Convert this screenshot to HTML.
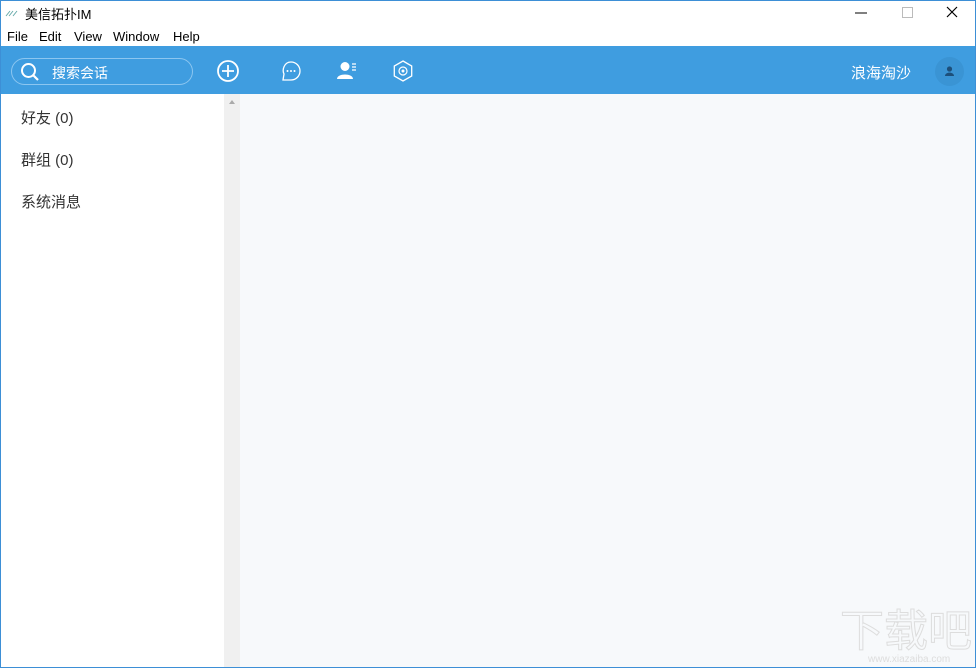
<!DOCTYPE html>
<html><head><meta charset="utf-8"><style>
*{margin:0;padding:0;box-sizing:border-box}
body{width:976px;height:668px;overflow:hidden;background:#fff;font-family:"Liberation Sans","Noto Sans CJK SC",sans-serif;position:relative}
.win{position:absolute;left:0;top:0;width:976px;height:668px;border:1px solid #3d8fd6}
.title{position:absolute;left:25px;top:4px;font-size:13px;color:#000}
.menu{position:absolute;top:29px;font-size:13px;color:#000}
.bar{position:absolute;left:1px;top:46px;width:974px;height:48px;background:#3f9de0}
.search{position:absolute;left:11px;top:58px;width:182px;height:27px;border:1px solid #8cc6f0;border-radius:14px}
.search span{position:absolute;left:40px;top:4px;color:#fff;font-size:14px}
.side{position:absolute;left:1px;top:94px;width:223px;height:573px;background:#fff}
.scroll{position:absolute;left:224px;top:94px;width:16px;height:573px;background:#f0f0f0}
.main{position:absolute;left:240px;top:94px;width:735px;height:573px;background:#f7f9fb}
.item{position:absolute;left:21px;font-size:15px;color:#333}
.user{position:absolute;left:851px;top:62px;color:#fff;font-size:15px}
.av{position:absolute;left:935px;top:57px;width:29px;height:29px;border-radius:50%;background:#3a94d4}
</style></head><body>
<div class="win"></div>
<svg style="position:absolute;left:5px;top:8px" width="14" height="10"><path d="M1 8 L5 3 M4 8 L8 3 M8 8 L12 3" stroke="#6aa" stroke-width="1"/></svg>
<div class="title">美信拓扑IM</div>
<svg style="position:absolute;left:852px;top:4px" width="112" height="18"><path d="M3 9 H15" stroke="#000"/><rect x="50.5" y="3.5" width="10" height="10" fill="none" stroke="#bbb"/><path d="M95 3 L105 13 M105 3 L95 13" stroke="#000" stroke-width="1.2"/></svg>
<div class="menu" style="left:7px">File</div>
<div class="menu" style="left:39px">Edit</div>
<div class="menu" style="left:74px">View</div>
<div class="menu" style="left:113px">Window</div>
<div class="menu" style="left:173px">Help</div>
<div class="bar"></div>
<div class="search"><svg style="position:absolute;left:8px;top:3px" width="20" height="20"><circle cx="8.5" cy="8.5" r="6.5" fill="none" stroke="#fff" stroke-width="2"/><path d="M13 13 L18 18" stroke="#fff" stroke-width="2.2"/></svg><span>搜索会话</span></div>
<svg style="position:absolute;left:216px;top:59px" width="24" height="24"><circle cx="12" cy="12" r="10" fill="none" stroke="#fff" stroke-width="1.8"/><path d="M12 6 V18 M6 12 H18" stroke="#fff" stroke-width="1.8"/></svg>
<svg style="position:absolute;left:280px;top:60px" width="22" height="22"><path d="M11 2 C16 2 20 6 20 11 C20 16 16 20 11 20 L3 20 L4 14 C2 10 4 2 11 2Z" fill="none" stroke="#fff" stroke-width="1.3"/><circle cx="7.5" cy="11" r="1" fill="#fff"/><circle cx="11" cy="11" r="1" fill="#fff"/><circle cx="14.5" cy="11" r="1" fill="#fff"/></svg>
<svg style="position:absolute;left:336px;top:60px" width="22" height="22"><circle cx="9" cy="6.5" r="4.5" fill="#fff"/><path d="M1 19 C1 13 17 13 17 19Z" fill="#fff"/><path d="M16 4 H20 M16 7 H20 M16 10 H20" stroke="#fff" stroke-width="1.3"/></svg>
<svg style="position:absolute;left:392px;top:60px" width="22" height="22"><path d="M11 1 L19.7 6 V16 L11 21 L2.3 16 V6Z" fill="none" stroke="#fff" stroke-width="1.3"/><circle cx="11" cy="11" r="4" fill="none" stroke="#fff" stroke-width="1.2"/><circle cx="11" cy="11" r="1.5" fill="#fff"/></svg>
<div class="user">浪海淘沙</div>
<div class="av"><svg width="29" height="29"><circle cx="14.5" cy="12" r="2.6" fill="#1d4f7a"/><path d="M10 19 C10 14.5 19 14.5 19 19Z" fill="#1d4f7a"/></svg></div>
<div class="side"></div>
<div class="scroll"><svg style="position:absolute;left:5px;top:6px" width="6" height="4"><path d="M0 4 L3 0 L6 4Z" fill="#aaa"/></svg></div>
<div class="main"></div>
<div class="item" style="top:107px">好友 (0)</div>
<div class="item" style="top:149px">群组 (0)</div>
<div class="item" style="top:191px">系统消息</div>
<div style="position:absolute;left:840px;top:608px;white-space:nowrap;font-size:44px;color:#f7f9fb;-webkit-text-stroke:1px #ddd;line-height:48px">下载吧</div>
<div style="position:absolute;left:868px;top:654px;white-space:nowrap;font-size:10px;color:#ddd">www.xiazaiba.com</div>
</body></html>
